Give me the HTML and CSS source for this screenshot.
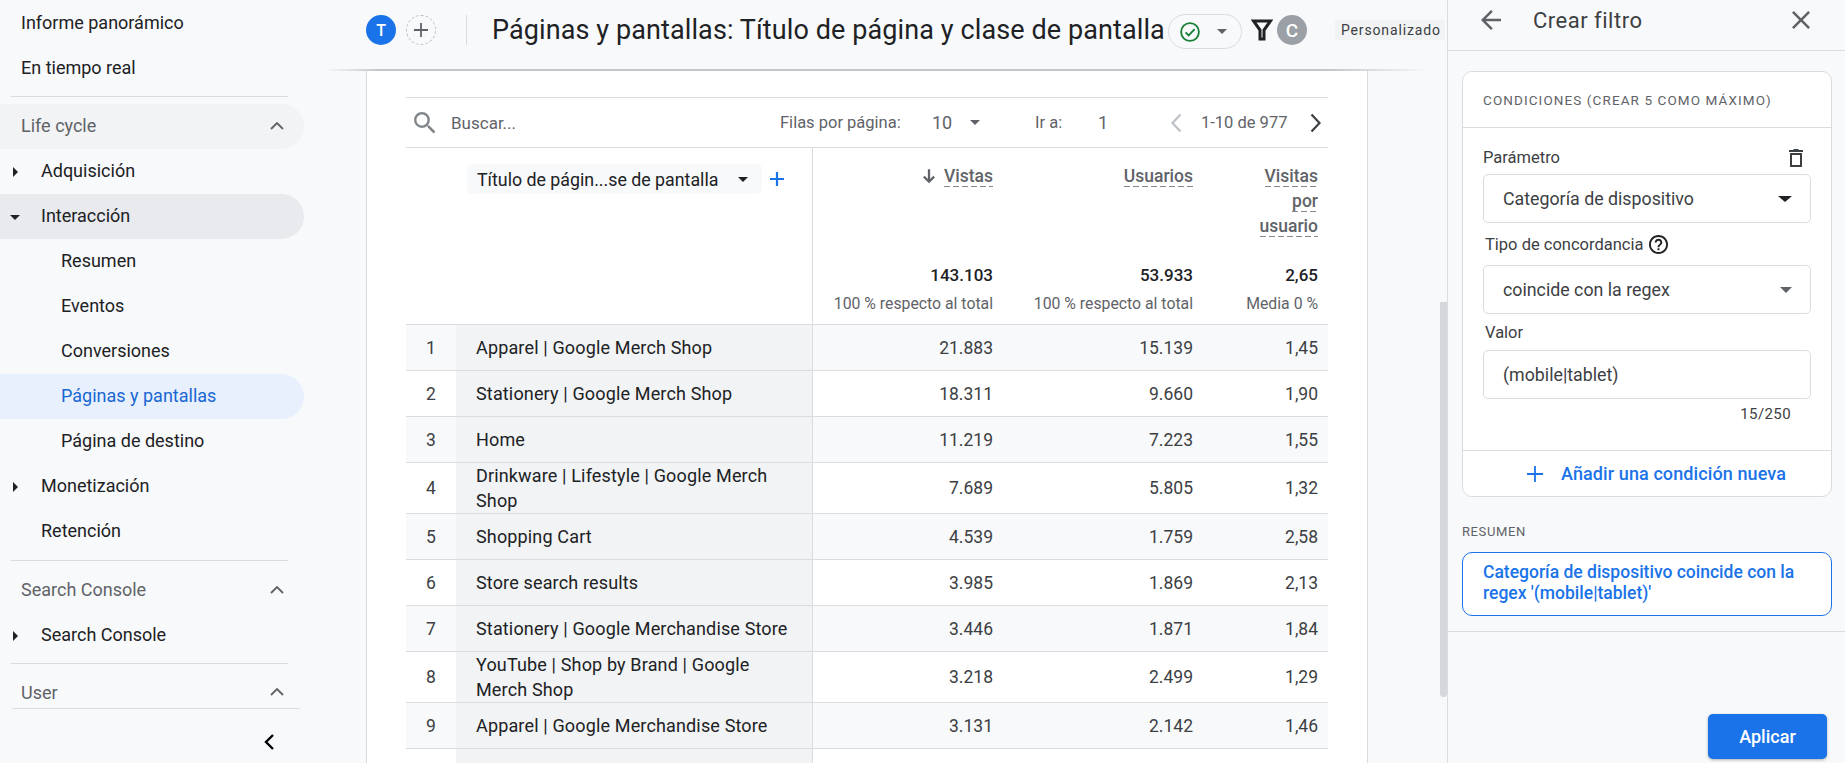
FILE: index.html
```html
<!DOCTYPE html>
<html lang="es">
<head>
<meta charset="utf-8">
<title>Páginas y pantallas</title>
<link rel="stylesheet" href="styles.css">
</head>
<body>
<div class="app">
  <aside class="sidebar">
    <nav class="nav">
      <div class="nav-item top">Informe panorámico</div>
      <div class="nav-item top">En tiempo real</div>
      <div class="nav-rule first"></div>
      <div class="nav-item group hovered">Life cycle<svg class="up" viewBox="0 0 14 8"><path d="M1 7l6-6 6 6"/></svg></div>
      <div class="nav-item l1"><span class="tri right"></span>Adquisición</div>
      <div class="nav-item l1 open"><span class="tri down"></span>Interacción</div>
      <div class="nav-item l2">Resumen</div>
      <div class="nav-item l2">Eventos</div>
      <div class="nav-item l2">Conversiones</div>
      <div class="nav-item l2 active">Páginas y pantallas</div>
      <div class="nav-item l2">Página de destino</div>
      <div class="nav-item l1"><span class="tri right"></span>Monetización</div>
      <div class="nav-item l1">Retención</div>
      <div class="nav-rule second"></div>
      <div class="nav-item group">Search Console<svg class="up" viewBox="0 0 14 8"><path d="M1 7l6-6 6 6"/></svg></div>
      <div class="nav-item l1"><span class="tri right"></span>Search Console</div>
      <div class="nav-rule third"></div>
      <div class="nav-item group user">User<svg class="up" viewBox="0 0 14 8"><path d="M1 7l6-6 6 6"/></svg></div>
    </nav>
    <div class="collapse">
      <svg viewBox="0 0 12 18"><path d="M10 2L3 9l7 7"/></svg>
    </div>
  </aside>

  <main class="main">
    <header class="topbar">
      <span class="avatar blue">T</span>
      <span class="add-compare"><svg viewBox="0 0 16 16"><path d="M8 1v14M1 8h14"/></svg></span>
      <span class="vsep"></span>
      <h1 class="title">Páginas y pantallas: Título de página y clase de pantalla</h1>
      <span class="status">
        <svg class="ok" viewBox="0 0 24 24"><circle cx="12" cy="12" r="9.7"/><path d="M7.2 12.4l3.4 3.4 6.4-7"/></svg>
        <span class="caret small"></span>
      </span>
      <svg class="funnel" viewBox="0 0 22 24"><path d="M2.5 3h17l-6.5 9v9H9v-9z"/></svg>
      <span class="avatar grey">C</span>
      <span class="custom">Personalizado</span>
    </header>

    <div class="content">
      <section class="report">
        <div class="toolbar">
          <svg class="search" viewBox="3 3 18 18"><path d="M15.5 14h-.79l-.28-.27A6.471 6.471 0 0 0 16 9.5 6.5 6.5 0 1 0 9.5 16c1.61 0 3.09-.59 4.23-1.57l.27.28v.79l5 4.99L20.49 19l-4.99-5zm-6 0C7.01 14 5 11.99 5 9.5S7.01 5 9.5 5 14 7.01 14 9.5 11.99 14 9.5 14z"/></svg>
          <span class="buscar">Buscar...</span>
          <span class="tb-label">Filas por página:</span>
          <span class="tb-ten">10</span>
          <span class="caret small tb-caret"></span>
          <span class="tb-go">Ir a:</span>
          <span class="tb-one">1</span>
          <svg class="pager off" viewBox="0 0 12 20"><path d="M10 1.5L2 10l8 8.5"/></svg>
          <span class="tb-range">1-10 de 977</span>
          <svg class="pager on" viewBox="0 0 12 20"><path d="M2 1.5L10 10l-8 8.5"/></svg>
        </div>

        <div class="grid head">
          <div class="h-blank"></div>
          <div class="h-dim">
            <span class="dim-chip">Título de págin...se de pantalla<span class="caret dark"></span></span>
            <svg class="dim-add" viewBox="0 0 16 16"><path d="M8 1v14M1 8h14"/></svg>
          </div>
          <div class="h-metric">
            <div class="h-name"><svg class="sort" viewBox="0 0 14 14"><path d="M7 1v11M2.5 7.5L7 12l4.5-4.5"/></svg><span class="dash">Vistas</span></div>
            <div class="total">143.103</div>
            <div class="sub">100 % respecto al total</div>
          </div>
          <div class="h-metric">
            <div class="h-name"><span class="dash">Usuarios</span></div>
            <div class="total">53.933</div>
            <div class="sub">100 % respecto al total</div>
          </div>
          <div class="h-metric">
            <div class="h-name"><span class="dash">Visitas</span><br><span class="dash">por</span><br><span class="dash">usuario</span></div>
            <div class="total">2,65</div>
            <div class="sub">Media 0 %</div>
          </div>
        </div>

        <div class="grid row"><div class="idx">1</div><div class="dim">Apparel | Google Merch Shop</div><div class="num">21.883</div><div class="num">15.139</div><div class="num">1,45</div></div>
        <div class="grid row"><div class="idx">2</div><div class="dim">Stationery | Google Merch Shop</div><div class="num">18.311</div><div class="num">9.660</div><div class="num">1,90</div></div>
        <div class="grid row"><div class="idx">3</div><div class="dim">Home</div><div class="num">11.219</div><div class="num">7.223</div><div class="num">1,55</div></div>
        <div class="grid row tall"><div class="idx">4</div><div class="dim">Drinkware | Lifestyle | Google Merch Shop</div><div class="num">7.689</div><div class="num">5.805</div><div class="num">1,32</div></div>
        <div class="grid row"><div class="idx">5</div><div class="dim">Shopping Cart</div><div class="num">4.539</div><div class="num">1.759</div><div class="num">2,58</div></div>
        <div class="grid row"><div class="idx">6</div><div class="dim">Store search results</div><div class="num">3.985</div><div class="num">1.869</div><div class="num">2,13</div></div>
        <div class="grid row"><div class="idx">7</div><div class="dim">Stationery | Google Merchandise Store</div><div class="num">3.446</div><div class="num">1.871</div><div class="num">1,84</div></div>
        <div class="grid row tall"><div class="idx">8</div><div class="dim">YouTube | Shop by Brand | Google Merch Shop</div><div class="num">3.218</div><div class="num">2.499</div><div class="num">1,29</div></div>
        <div class="grid row"><div class="idx">9</div><div class="dim">Apparel | Google Merchandise Store</div><div class="num">3.131</div><div class="num">2.142</div><div class="num">1,46</div></div>
        <div class="grid row"><div class="idx"></div><div class="dim"></div><div class="num"></div><div class="num"></div><div class="num"></div></div>
      </section>
      <div class="gutter"><span class="thumb"></span></div>
    </div>
  </main>

  <aside class="panel">
    <div class="panel-head">
      <svg class="p-icon" viewBox="4 4 16 16"><path d="M20 11H7.83l5.59-5.59L12 4l-8 8 8 8 1.41-1.41L7.83 13H20v-2z"/></svg>
      <span class="p-title">Crear filtro</span>
      <svg class="p-icon close" viewBox="5 5 14 14"><path d="M19 6.41L17.59 5 12 10.59 6.41 5 5 6.41 10.59 12 5 17.59 6.41 19 12 13.41 17.59 19 19 17.59 13.41 12z"/></svg>
    </div>
    <div class="panel-body">
      <div class="card">
        <div class="card-title">CONDICIONES (CREAR 5 COMO MÁXIMO)</div>
        <div class="card-form">
          <div class="f-label first">Parámetro<svg class="trash" viewBox="5 3 14 18"><path fill-rule="evenodd" d="M6 7h12v14H6zM8 9v10h8V9zM5 4h4l1-1h4l1 1h4v2H5z"/></svg></div>
          <div class="field">Categoría de dispositivo<span class="caret black"></span></div>
          <div class="f-label second">Tipo de concordancia<svg class="help" viewBox="2 2 20 20"><path d="M11 18h2v-2h-2v2zm1-16C6.48 2 2 6.48 2 12s4.48 10 10 10 10-4.48 10-10S17.52 2 12 2zm0 18c-4.41 0-8-3.59-8-8s3.59-8 8-8 8 3.59 8 8-3.59 8-8 8zm0-14c-2.21 0-4 1.79-4 4h2c0-1.1.9-2 2-2s2 .9 2 2c0 2-3 1.75-3 5h2c0-2.25 3-2.5 3-5 0-2.21-1.79-4-4-4z"/></svg></div>
          <div class="field">coincide con la regex<span class="caret grey"></span></div>
          <div class="f-label third">Valor</div>
          <div class="field">(mobile|tablet)</div>
          <div class="count">15/250</div>
        </div>
        <div class="card-add"><svg viewBox="0 0 18 18"><path d="M9 1v16M1 9h16"/></svg>Añadir una condición nueva</div>
      </div>
      <div class="sum-label">RESUMEN</div>
      <div class="sum-box">Categoría de dispositivo coincide con la regex '(mobile|tablet)'</div>
    </div>
    <div class="panel-foot"><button class="apply" type="button">Aplicar</button></div>
  </aside>
</div>
</body>
</html>
```
FILE: styles.css
```css
* { box-sizing: border-box; }
html, body { margin: 0; height: 100%; overflow: hidden; }
body { font-family: Roboto, "Liberation Sans", sans-serif; color: #202124; background: #f8f9fa; }
.app { display: flex; width: 1845px; height: 763px; overflow: hidden; }

/* sidebar */
.sidebar { width: 366px; flex: none; display: flex; flex-direction: column; }
.nav { display: flex; flex-direction: column; width: 304px; }
.nav-item { height: 45px; display: flex; align-items: center; font-size: 18px; color: #202124; padding: 0 0 2px 21px; position: relative; border-radius: 0 23px 23px 0; flex: none; }
.nav-item.top { padding-bottom: 0; }
.nav-item.l1 { padding-left: 41px; }
.nav-item.l2 { padding-left: 61px; }
.nav-item.group { color: #5f6368; justify-content: space-between; padding-right: 20px; }
.nav-item.hovered { background: #f1f3f4; }
.nav-item.open { background: #e8eaed; }
.nav-item.active { background: #e8f0fe; color: #1967d2; }
.nav-rule { height: 1px; background: #dadce0; margin: 6px 16px 7px 11px; flex: none; }
.nav-rule.third { margin-top: 5px; }
.nav-item.user { height: 30px; margin-top: 7px; }
.up { width: 14px; height: 8px; fill: none; stroke: #5f6368; stroke-width: 1.8; }
.tri { position: absolute; left: 13px; top: 50%; width: 0; height: 0; }
.tri.right { margin-top: -5px; border-left: 5px solid #202124; border-top: 5px solid transparent; border-bottom: 5px solid transparent; }
.tri.down { left: 10px; margin-top: -2px; border-top: 5px solid #202124; border-left: 5px solid transparent; border-right: 5px solid transparent; }
.collapse { margin: 0 0 0 12px; width: 288px; border-top: 1px solid #dadce0; display: flex; justify-content: flex-end; padding: 24px 25px 0 0; }
.collapse svg { width: 12px; height: 18px; fill: none; stroke: #000; stroke-width: 2.4; }

/* main */
.main { width: 1081px; flex: none; display: flex; flex-direction: column; position: relative; }
.topbar { height: 70px; flex: none; display: flex; align-items: center; padding: 0 0 10px 0; position: relative; z-index: 2; background: #f8f9fa; }
.topbar::after { content: ""; position: absolute; left: -42px; width: 1105px; bottom: -1px; height: 2px; background: linear-gradient(90deg, rgba(180,183,188,0) 0, #c4c7ca 5%, #c4c7ca 91%, rgba(180,183,188,0) 100%); }
.avatar { width: 30px; height: 30px; border-radius: 50%; color: #fff; display: flex; align-items: center; justify-content: center; font-size: 16px; font-weight: 500; flex: none; }
.avatar.blue { background: #1a73e8; }
.avatar.grey { background: #9aa0a6; font-size: 19px; margin-left: 4px; }
.add-compare { width: 30px; height: 30px; border-radius: 50%; border: 1px dashed #bdc1c6; margin-left: 10px; display: flex; align-items: center; justify-content: center; flex: none; }
.add-compare svg { width: 16px; height: 16px; fill: none; stroke: #5f6368; stroke-width: 1.8; }
.vsep { width: 1px; height: 30px; background: #dadce0; margin: 0 25px 0 30px; flex: none; }
.title { margin: 0; font-size: 27px; font-weight: 400; letter-spacing: .1px; white-space: nowrap; line-height: 34px; flex: none; width: 676px; color: #202124; }
.status { width: 74px; height: 35px; border: 1px solid #dadce0; border-radius: 18px; display: flex; align-items: center; padding-left: 10px; gap: 16px; flex: none; margin-top: 3px; }
.ok { width: 22px; height: 22px; fill: none; stroke: #188038; stroke-width: 2; }
.funnel { width: 22px; height: 24px; fill: none; stroke: #202124; stroke-width: 3; margin-left: 9px; flex: none; }
.custom { margin-left: 28px; height: 20px; background: #f1f3f4; font-size: 14px; letter-spacing: .85px; color: #3c4043; padding: 0 4px 0 6px; display: flex; align-items: center; white-space: nowrap; flex: none; }
.caret { display: inline-block; width: 0; height: 0; border-left: 6px solid transparent; border-right: 6px solid transparent; flex: none; }
.caret.grey { border-top: 6px solid #5f6368; }
.caret.small { border-top: 5px solid #5f6368; border-left-width: 5px; border-right-width: 5px; }
.caret.dark { border-top: 5px solid #202124; border-left-width: 5px; border-right-width: 5px; }
.caret.black { border-top: 6px solid #202124; border-left-width: 7px; border-right-width: 7px; }

.content { flex: 1; display: flex; min-height: 0; }
.report { width: 1002px; flex: none; background: #fff; border-left: 1px solid #dadce0; border-right: 1px solid #dadce0; padding: 27px 39px 0 39px; overflow: hidden; }
.gutter { flex: 1; position: relative; }
.thumb { position: absolute; right: 0; top: 232px; width: 7px; height: 395px; background: #d5d7da; border-radius: 0 0 4px 4px; }

.toolbar { height: 51px; border-top: 1px solid #dadce0; border-bottom: 1px solid #dadce0; display: flex; align-items: center; font-size: 16.5px; color: #5f6368; }
.search { width: 22px; height: 22px; fill: #80868b; margin-left: 8px; flex: none; }
.buscar { margin-left: 15px; font-size: 17px; width: 329px; flex: none; }
.tb-label { width: 152px; flex: none; white-space: nowrap; }
.tb-ten { width: 38px; flex: none; font-size: 18px; }
.tb-caret { margin-right: 55px; }
.tb-go { width: 63px; flex: none; }
.tb-one { width: 72px; flex: none; font-size: 18px; }
.pager { width: 13px; height: 20px; fill: none; stroke-width: 2.2; flex: none; }
.pager.off { stroke: #bdc1c6; margin-right: 18px; }
.pager.on { stroke: #3c4043; margin-left: 21px; }
.tb-range { width: 87px; flex: none; white-space: nowrap; }

.grid { display: grid; grid-template-columns: 50px 357px 190px 200px 125px; }
.head { height: 177px; border-bottom: 1px solid #dadce0; }
.h-dim { border-right: 1px solid #dadce0; padding: 16px 0 0 11px; display: flex; align-items: flex-start; }
.dim-chip { height: 30px; width: 295px; background: #f8f9fa; border-radius: 5px; font-size: 17.8px; display: flex; align-items: center; justify-content: space-between; padding: 0 14px 0 10px; white-space: nowrap; }
.dim-add { width: 16px; height: 16px; fill: none; stroke: #1a73e8; stroke-width: 2.2; margin: 7px 0 0 7px; }
.h-metric { padding: 16px 10px 0 0; text-align: right; position: relative; }
.h-name { font-size: 17.5px; line-height: 25px; color: #5f6368; font-weight: 500; }
.dash { padding-bottom: 1px; background: repeating-linear-gradient(90deg, #80868b 0 6px, transparent 6px 9px) left bottom / 100% 1.5px no-repeat; }
.sort { width: 16px; height: 16px; fill: none; stroke: #5f6368; stroke-width: 2; margin-right: 7px; vertical-align: -2px; }
.total { font-size: 17px; font-weight: 500; line-height: 25px; color: #202124; position: absolute; right: 10px; top: 115px; }
.sub { font-size: 15.8px; color: #5f6368; line-height: 20px; white-space: nowrap; position: absolute; right: 10px; top: 146px; }

.row { min-height: 46px; border-bottom: 1px solid #dadce0; font-size: 17.5px; }
.row.tall { min-height: 51px; }
.row:nth-child(odd) { background: #f8f9fa; }
.idx { display: flex; align-items: center; justify-content: center; color: #3c4043; }
.dim { background: #f1f3f4; padding: 0 20px; display: flex; align-items: center; font-size: 18px; letter-spacing: .15px; line-height: 25px; border-right: 1px solid #dadce0; }
.num { display: flex; align-items: center; justify-content: flex-end; padding-right: 10px; color: #3c4043; }

/* panel */
.panel { width: 398px; flex: none; border-left: 1px solid #dadce0; display: flex; flex-direction: column; }
.panel-head { height: 51px; border-bottom: 1px solid #dadce0; display: flex; align-items: center; padding: 0 0 10px 0; flex: none; }
.p-icon { width: 20px; height: 20px; fill: #5f6368; margin-left: 33px; flex: none; }
.p-icon.close { width: 18px; height: 18px; margin-left: 0; }
.p-title { font-size: 22px; letter-spacing: .5px; margin-left: 32px; width: 259px; color: #3c4043; }
.panel-body { padding: 20px 13px 0 14px; border-bottom: 1px solid #dadce0; height: 581px; flex: none; }
.card { background: #fff; border: 1px solid #dadce0; border-radius: 10px; height: 426px; display: flex; flex-direction: column; }
.card-title { height: 56px; border-bottom: 1px solid #dadce0; font-size: 13.5px; letter-spacing: 1.1px; color: #5f6368; display: flex; align-items: center; padding-left: 20px; flex: none; }
.card-form { height: 323px; border-bottom: 1px solid #dadce0; padding: 0 20px; flex: none; }
.f-label { font-size: 16.5px; color: #3c4043; display: flex; align-items: center; gap: 6px; padding-left: 2px; }
.f-label.first { height: 46px; padding: 13px 0 0 0; justify-content: space-between; }
.f-label.second { height: 42px; }
.f-label.third { height: 36px; }
.trash { width: 14px; height: 18px; fill: #3c4043; margin-right: 8px; }
.help { width: 19px; height: 19px; fill: #202124; }
.field { height: 49px; border: 1px solid #dadce0; border-radius: 5px; display: flex; align-items: center; justify-content: space-between; padding: 0 18px 0 19px; font-size: 17.8px; color: #3c4043; }
.count { text-align: right; font-size: 15px; color: #3c4043; padding: 6px 20px 0 0; letter-spacing: .4px; }
.card-add { flex: 1; display: flex; align-items: center; padding-left: 63px; gap: 17px; color: #1a73e8; font-size: 18px; font-weight: 500; letter-spacing: .1px; }
.card-add svg { width: 18px; height: 18px; fill: none; stroke: #1a73e8; stroke-width: 1.8; flex: none; }
.sum-label { font-size: 13px; letter-spacing: .6px; color: #5f6368; margin-top: 26px; line-height: 18px; }
.sum-box { background: #fff; border: 1px solid #1a73e8; border-radius: 10px; height: 64px; margin-top: 11px; padding: 9px 20px 0 20px; font-size: 17.5px; line-height: 21px; color: #1a73e8; font-weight: 500; }
.panel-foot { flex: 1; display: flex; justify-content: flex-end; align-items: flex-end; padding: 0 18px 4px 0; }
.apply { width: 119px; height: 45px; background: #1a73e8; color: #fff; border: 0; border-radius: 5px; font: 500 18px Roboto, sans-serif; box-shadow: 0 1px 3px rgba(60,64,67,.4); }
```
